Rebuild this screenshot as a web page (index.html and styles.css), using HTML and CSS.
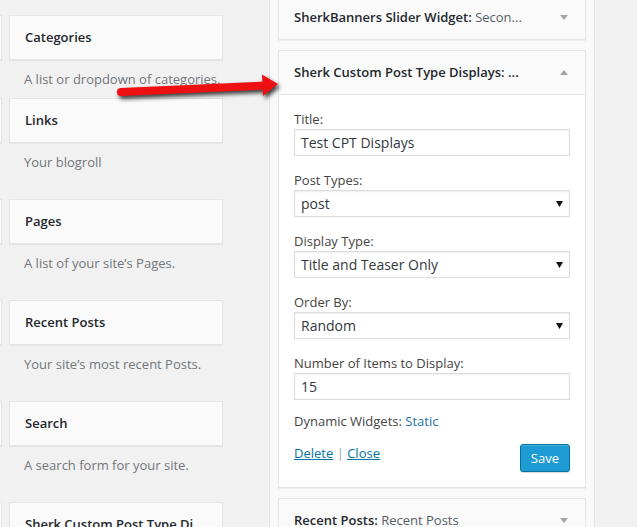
FILE: index.html
```html
<!DOCTYPE html>
<html lang="en">
<head>
<meta charset="utf-8">
<title>Widgets</title>
<link rel="stylesheet" href="styles.css">
</head>
<body>
<div class="page">
  <div class="available">
    <div class="cut"></div>
    <div class="widget">
      <div class="widget-top"><h3 class="widget-title">Categories</h3></div>
      <div class="widget-desc">A list or dropdown of categories.</div>
    </div>
    <div class="cut"></div>
    <div class="widget">
      <div class="widget-top"><h3 class="widget-title">Links</h3></div>
      <div class="widget-desc">Your blogroll</div>
    </div>
    <div class="cut"></div>
    <div class="widget">
      <div class="widget-top"><h3 class="widget-title">Pages</h3></div>
      <div class="widget-desc">A list of your site’s Pages.</div>
    </div>
    <div class="cut"></div>
    <div class="widget">
      <div class="widget-top"><h3 class="widget-title">Recent Posts</h3></div>
      <div class="widget-desc">Your site’s most recent Posts.</div>
    </div>
    <div class="cut"></div>
    <div class="widget">
      <div class="widget-top"><h3 class="widget-title">Search</h3></div>
      <div class="widget-desc">A search form for your site.</div>
    </div>
    <div class="cut"></div>
    <div class="widget">
      <div class="widget-top"><h3 class="widget-title widget-title-clip">Sherk Custom Post Type Di</h3></div>
    </div>
  </div>

  <div class="sidebar">
    <div class="swidget">
      <div class="swidget-top">
        <span class="swidget-title">SherkBanners Slider Widget:<span class="in-title"> Secon...</span></span>
        <svg class="toggle" width="8" height="5" viewBox="0 0 8 5"><polygon points="0,0 8,0 4,5" fill="#a0a5aa"/></svg>
      </div>
    </div>

    <div class="swidget">
      <div class="swidget-top">
        <span class="swidget-title">Sherk Custom Post Type Displays: ...</span>
        <svg class="toggle" width="8" height="5" viewBox="0 0 8 5"><polygon points="0,5 8,5 4,0" fill="#a0a5aa"/></svg>
      </div>
      <div class="widget-inside">
        <div class="field">
          <label class="label">Title:</label>
          <div class="input">Test CPT Displays</div>
        </div>
        <div class="field">
          <label class="label">Post Types:</label>
          <div class="input select"><span>post</span><svg width="7" height="6" viewBox="0 0 7 6"><polygon points="0,0 7,0 3.5,6" fill="#111"/></svg></div>
        </div>
        <div class="field">
          <label class="label">Display Type:</label>
          <div class="input select"><span>Title and Teaser Only</span><svg width="7" height="6" viewBox="0 0 7 6"><polygon points="0,0 7,0 3.5,6" fill="#111"/></svg></div>
        </div>
        <div class="field">
          <label class="label">Order By:</label>
          <div class="input select"><span>Random</span><svg width="7" height="6" viewBox="0 0 7 6"><polygon points="0,0 7,0 3.5,6" fill="#111"/></svg></div>
        </div>
        <div class="field field-last">
          <label class="label">Number of Items to Display:</label>
          <div class="input">15</div>
        </div>
        <p class="note">Dynamic Widgets: <span class="note-link">Static</span></p>
        <div class="widget-control">
          <div class="actions"><a class="link">Delete</a><span class="sep"> | </span><a class="link">Close</a></div>
          <button class="button-primary">Save</button>
        </div>
      </div>
    </div>

    <div class="swidget">
      <div class="swidget-top">
        <span class="swidget-title">Recent Posts:<span class="in-title"> Recent Posts</span></span>
        <svg class="toggle" width="8" height="5" viewBox="0 0 8 5"><polygon points="0,0 8,0 4,5" fill="#a0a5aa"/></svg>
      </div>
    </div>
  </div>

  <svg class="arrow" width="190" height="50" viewBox="0 0 190 50">
    <g class="arrow-shape">
      <line x1="21" y1="32" x2="165" y2="25.5" stroke="#ee1010" stroke-width="8" stroke-linecap="round"/>
      <polygon points="162,14.5 178,24 163,36" fill="#ee1010"/>
    </g>
  </svg>
</div>
</body>
</html>
```

FILE: styles.css
```css
* { box-sizing: border-box; }

html, body {
  margin: 0;
  padding: 0;
  background: #f1f1f1;
  height: 527px;
  overflow: hidden;
}

body {
  font-family: "Open Sans", "Liberation Sans", sans-serif;
  font-size: 13px;
  color: #444;
}

.page {
  position: relative;
  display: flex;
  align-items: flex-start;
}

/* available widgets list */
.available {
  display: grid;
  grid-template-columns: 2px 214px;
  grid-template-rows: 83px repeat(5, 101px);
  column-gap: 7px;
  padding-top: 15px;
  flex: none;
}

.cut {
  height: 45px;
  background: #fafafa;
  border: 1px solid #e5e5e5;
  border-left: none;
  box-shadow: 0 1px 1px rgba(0,0,0,.04);
}

.widget-top {
  background: #fafafa;
  border: 1px solid #e5e5e5;
  box-shadow: 0 1px 1px rgba(0,0,0,.04);
}

.widget-title {
  margin: 0;
  padding: 13px 15px;
  font-size: 13px;
  line-height: 17px;
  font-weight: 600;
  color: #23282d;
  white-space: nowrap;
}

.widget-desc {
  padding: 10px 0 0 15px;
  line-height: 18px;
  color: #72777c;
  white-space: nowrap;
}

/* sidebar */
.sidebar {
  flex: none;
  width: 326px;
  margin-left: 46px;
  margin-top: -5px;
  padding: 0 8px;
  background: #f9f9f9;
  border-left: 1px solid #e5e5e5;
  border-right: 1px solid #e5e5e5;
}

.swidget {
  background: #fff;
  border: 1px solid #e5e5e5;
  box-shadow: 0 1px 1px rgba(0,0,0,.04);
  margin-bottom: 10px;
}

.swidget-top {
  display: flex;
  align-items: center;
  justify-content: space-between;
  background: #fafafa;
  padding: 0 17px 0 15px;
  height: 43px;
}

.swidget-title {
  font-size: 13px;
  line-height: 17px;
  font-weight: 600;
  color: #23282d;
  white-space: nowrap;
}

.in-title {
  font-weight: 400;
  color: #555d66;
}

.toggle { flex: none; display: block; }

.widget-inside {
  border-top: 1px solid #e5e5e5;
  padding: 15px;
  background: #fff;
}

.field { margin-bottom: 15px; }
.field-last { margin-bottom: 12px; }

.label {
  display: block;
  line-height: 18px;
  margin-bottom: 1px;
  color: #444;
}

.input {
  display: flex;
  align-items: center;
  height: 27px;
  padding: 0 6px;
  border: 1px solid #ddd;
  box-shadow: inset 0 1px 2px rgba(0,0,0,.07);
  background: #fff;
  font-size: 14px;
  color: #32373c;
}

.select {
  justify-content: space-between;
}

.select svg { display: block; flex: none; }

.note {
  margin: 0 0 14px;
  line-height: 18px;
  color: #444;
}

.note-link { color: #2271a8; }

.widget-control {
  display: flex;
  justify-content: space-between;
  align-items: flex-start;
}

.actions { line-height: 18px; }

.link {
  color: #0074a2;
  text-decoration: underline;
}

.sep { color: #a0a5aa; }

.button-primary {
  height: 28px;
  padding: 0 10px 1px;
  border: 1px solid #0074a2;
  border-radius: 3px;
  background: #1e9bd2;
  box-shadow: inset 0 1px 0 rgba(120,200,230,.5), 0 1px 0 rgba(0,0,0,.15);
  color: #fff;
  font-family: "Open Sans", "Liberation Sans", sans-serif;
  font-size: 13px;
  line-height: 26px;
}

/* annotation arrow */
.arrow {
  position: absolute;
  left: 100px;
  top: 60px;
  overflow: visible;
}

.arrow-shape {
  filter: drop-shadow(2px 3px 2px rgba(0,0,0,.75));
}
```
